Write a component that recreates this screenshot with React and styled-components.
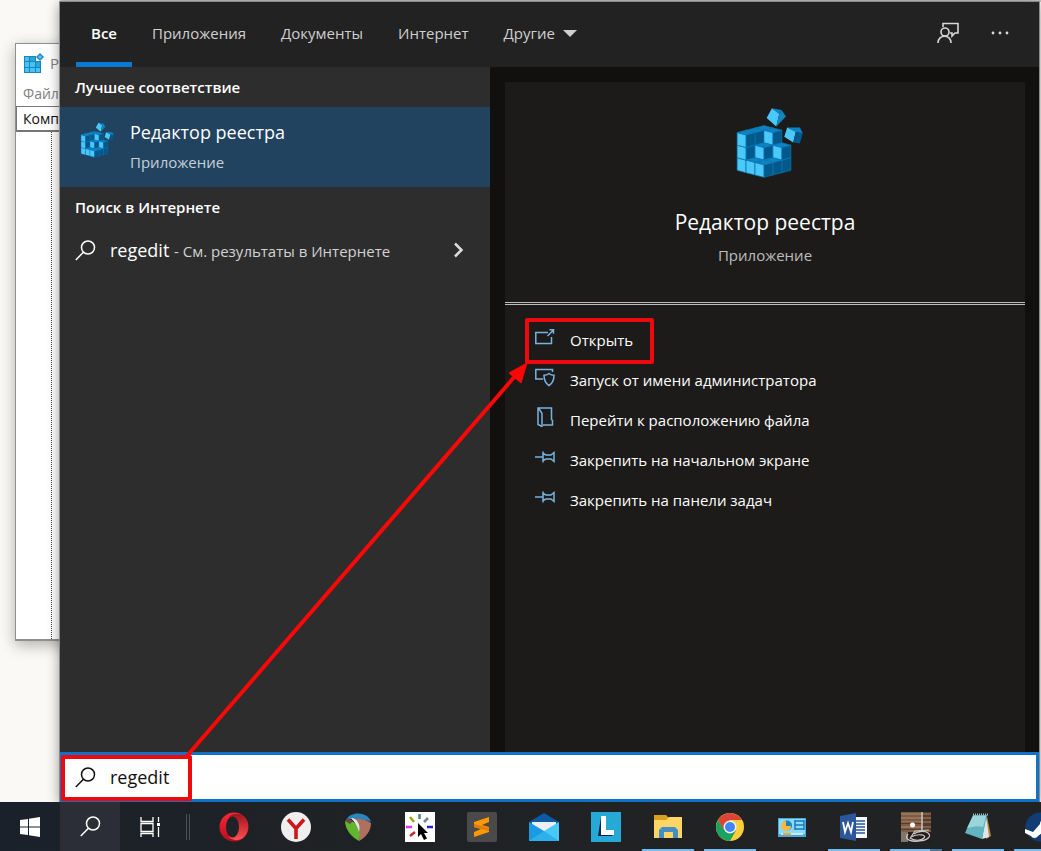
import * as React from "react"
import styled, { createGlobalStyle } from "styled-components"

const GlobalStyle = createGlobalStyle`
  * {
    box-sizing: border-box;
  }
  body {
    margin: 0;
    background: #faf9f5;
    font-family: "Open Sans", "Noto Sans", sans-serif;
  }
  button,
  input {
    font: inherit;
    color: inherit;
  }
  svg {
    display: block;
    flex: none;
  }
`

const Page = styled.div`
  min-height: 100vh;
  display: flex;
  flex-direction: column;
  overflow: hidden;
`

const Desktop = styled.div`
  position: relative;
  flex: 1;
  display: flex;
  padding: 2px 2px 0 60px;
  overflow: hidden;
  background: linear-gradient(#c4c4c4 2px, transparent 2px) 60px 0 no-repeat, #faf9f5;
`

const BackWindow = styled.section`
  position: absolute;
  left: 15px;
  top: 43px;
  bottom: 161px;
  width: 180px;
  display: flex;
  flex-direction: column;
  background: #fff;
  border: 1px solid #8d8f92;
  border-bottom-width: 2px;
  box-shadow: 0 4px 14px rgba(0, 0, 0, 0.3);
  font-size: 15px;
  color: #828282;

  & > .titlebar {
    height: 38px;
    padding-left: 8px;
    display: flex;
    align-items: center;
    gap: 6px;
  }
  & > .menu {
    height: 24px;
    padding-left: 7px;
    line-height: 24px;
    font-size: 14px;
  }
  & > .address {
    height: 26px;
    padding-left: 6px;
    line-height: 24px;
    font-size: 14px;
    color: #111;
    border: 1px solid #777;
    border-bottom-width: 2px;
  }
  & > .tree {
    flex: 1;
    width: 36px;
    border-right: 1px dotted #444;
  }
`

const Panel = styled.main`
  position: relative;
  flex: 1;
  display: flex;
  flex-direction: column;
  box-shadow: 0 0 0 1px #8b8b8b, 0 2px 12px rgba(0, 0, 0, 0.45);
`

const Header = styled.header`
  height: 65px;
  padding: 0 24px 0 16px;
  display: flex;
  align-items: stretch;
  justify-content: space-between;
  background: #222;
  color: #d0d0d0;

  & > nav {
    display: flex;
    gap: 5px;
  }
  & > div {
    display: flex;
    align-items: center;
    gap: 22px;
    padding-bottom: 3px;
  }
`

const Tab = styled.button`
  display: flex;
  align-items: center;
  gap: 8px;
  padding: 2px 15px 0;
  border: 0;
  border-bottom: 5px solid ${props => (props.$active ? "#0a78d4" : "transparent")};
  background: none;
  font-size: 15px;
  font-weight: ${props => (props.$active ? 600 : 400)};
  color: ${props => (props.$active ? "#fff" : "#d0d0d0")};
`

const IconButton = styled.button`
  display: flex;
  align-items: center;
  justify-content: center;
  width: 30px;
  height: 30px;
  padding: 0;
  border: 0;
  background: none;
`

const Body = styled.div`
  flex: 1;
  display: grid;
  grid-template-columns: 430px 1fr;
`

const Results = styled.div`
  background: #2d2d2d;
  color: #fff;

  & > h2 {
    margin: 0;
    padding: 0 15px;
    font-size: 15px;
    font-weight: 600;
    line-height: 40px;
  }
`

const BestMatch = styled.button`
  width: 100%;
  height: 80px;
  padding: 0 15px;
  display: flex;
  align-items: center;
  gap: 15px;
  border: 0;
  background: #21435f;
  text-align: left;

  & > svg {
    margin-bottom: 14px;
  }
  & strong,
  & span {
    display: block;
  }
  & strong {
    font-size: 18px;
    font-weight: 400;
    line-height: 30px;
  }
  & span {
    font-size: 15px;
    line-height: 30px;
    color: #c4d0da;
  }
`

const WebResult = styled.button`
  width: 100%;
  height: 46px;
  padding: 0 26px 0 15px;
  display: flex;
  align-items: center;
  border: 0;
  background: none;
  text-align: left;

  & > p {
    flex: 1;
    margin: 0 0 0 14px;
    font-size: 18px;
  }
  & small {
    font-size: 15px;
    color: #d2d2d2;
  }
`

const Details = styled.div`
  display: flex;
  padding: 15px 14px 0 15px;
  background: #11100f;
`

const Card = styled.div`
  flex: 1;
  background: #1c1b19;
  color: #fff;
`

const Hero = styled.div`
  height: 223px;
  padding-top: 25px;
  display: flex;
  flex-direction: column;
  align-items: center;
  border-bottom: 3px double #bdbdbd;

  & > h1 {
    margin: 27px 0 0;
    font-size: 21px;
    font-weight: 400;
    line-height: 32px;
  }
  & > p {
    margin: 4px 0 0;
    font-size: 15px;
    line-height: 26px;
    color: #bdbdbd;
  }
`

const Actions = styled.ul`
  list-style: none;
  margin: 0;
  padding: 15px 15px 0 20px;

  & > li {
    position: relative;
  }
`

const Action = styled.button`
  width: 100%;
  height: 40px;
  padding: 0 10px;
  display: flex;
  align-items: center;
  gap: 15px;
  border: 0;
  background: none;
  font-size: 15px;
  text-align: left;

  & > svg {
    margin-bottom: 6px;
  }
`

const SearchBar = styled.label`
  position: relative;
  height: 50px;
  display: flex;
  align-items: center;
  gap: 14px;
  padding-left: 12px;
  border: 3px solid #0f72c6;
  background: #fff;
  color: #111;

  & > input {
    flex: 1;
    min-width: 0;
    padding: 0;
    border: 0;
    outline: 0;
    background: none;
    font-size: 18px;
  }
`

const Highlight = styled.div`
  position: absolute;
  left: ${props => props.$left}px;
  top: ${props => props.$top}px;
  width: ${props => props.$width}px;
  height: 46px;
  border: 4px solid #ee0a0c;
  border-radius: 2px;
  pointer-events: none;
`

const Arrow = styled.svg`
  position: absolute;
  left: 180px;
  bottom: 40px;
  pointer-events: none;
`

const Taskbar = styled.footer`
  height: 49px;
  display: flex;
  overflow: hidden;
  background: linear-gradient(90deg, #1a212b, #1f2225 30%, #212223);
`

const SystemButton = styled.button`
  flex: none;
  width: 60px;
  padding: 0;
  display: flex;
  align-items: center;
  justify-content: center;
  border: 0;
  background: ${props => (props.$active ? "#2b2e36" : "none")};
`

const Separator = styled.div`
  flex: none;
  width: 4px;
  height: 26px;
  margin: 12px 13px 0 6px;
  border: solid #4d5157;
  border-width: 0 1px;
`

const underline = props => {
  if (props.$grouped) return "linear-gradient(90deg, #76b9ed 40px, #4d7898 40px)"
  return props.$running ? "linear-gradient(#76b9ed, #76b9ed)" : "none"
}

const TaskButton = styled.button`
  flex: none;
  width: 52px;
  margin: 0 5px;
  padding: 0;
  display: flex;
  align-items: center;
  justify-content: center;
  border: 0;
  background: ${underline} bottom / 100% 2px no-repeat;
`

// corner of the cube grid: i goes to the front, j to the right, k up
const corner = (i, j, k) => `${111 + 27 * i + 27 * j},${226 + 7 * i - 7 * j - 38 * k}`
const cubes = []
for (let i = 0; i < 3; i++) {
  for (let j = 2; j >= 0; j--) {
    for (let k = 0; k < 3; k++) {
      if (k === 0 || (k === 1 && i <= j) || (k === 2 && (i === 0 || (i === 1 && j === 2)))) {
        cubes.push([i, j, k])
      }
    }
  }
}

const RegistryIcon = ({ width, height }) => (
  <svg width={width} height={height} viewBox="75 35 240 217">
    {cubes.map(([i, j, k]) => (
      <g key={`${i}${j}${k}`} stroke="#0d77b2" strokeWidth="2" strokeLinejoin="round">
        <polygon
          fill="#4bc8fb"
          points={[corner(i, j, k), corner(i + 1, j, k), corner(i + 1, j, k + 1), corner(i, j, k + 1)].join(" ")}
        />
        <polygon
          fill="#00598a"
          points={[corner(i + 1, j, k), corner(i + 1, j + 1, k), corner(i + 1, j + 1, k + 1), corner(i + 1, j, k + 1)].join(" ")}
        />
        <polygon
          fill="#0b83c4"
          points={[corner(i, j, k + 1), corner(i + 1, j, k + 1), corner(i + 1, j + 1, k + 1), corner(i, j + 1, k + 1)].join(" ")}
        />
      </g>
    ))}
    <path fill="#4bc8fb" d="M216 39l22 16-9 39-29-26z" />
    <path fill="#0b83c4" d="M216 39l29 5-7 12z" />
    <path fill="#1583bd" d="M245 44l13 20-29 30 9-39z" />
    <path fill="#4bc8fb" d="M262 97l26 12-8 33-27-17z" />
    <path fill="#0b83c4" d="M262 97h38l9 17-21-3z" />
    <path fill="#00598a" d="M288 110l21 4-9 31-20-3z" />
  </svg>
)

const RegistrySmallIcon = () => (
  <svg width="20" height="20" viewBox="0 0 20 20">
    <path fill="#1786bd" d="M0 3h12v5h5v12H0z" />
    <path
      fill="#48c3f3"
      d="M1 4h4v4H1zM1 9h4v5H1zM6 9h5v5H6zM1 15h4v4H1zM6 15h5v4H6zM12 15h4v4h-4z"
    />
    <path fill="#28a5db" d="M6 4h5v4H6zM12 9h4v5h-4z" />
    <path fill="#2288b9" d="M16 0l4 4-4 4-4-4z" />
    <path fill="#65c6ec" d="M16 2l2 2-2 2-2-2z" />
  </svg>
)

const SearchIcon = ({ color = "#fff" }) => (
  <svg width="21" height="21" viewBox="0 0 21 21" fill="none" stroke={color} strokeWidth="1.5">
    <circle cx="13" cy="7.5" r="6.5" />
    <path d="M8.4 12.2L.8 20" />
  </svg>
)

const lineIcon = {
  width: 20,
  height: 20,
  viewBox: "0 0 20 20",
  fill: "none",
  stroke: "#78b3df",
  strokeWidth: 1.5,
}

const OpenIcon = () => (
  <svg {...lineIcon}>
    <path d="M13 5.500H.8v11h15.700V10M12.500 9l5.500-5.500M14.500 2.800h4v4" />
  </svg>
)

const AdminIcon = () => (
  <svg {...lineIcon}>
    <path d="M8 12H.8V2.500h16.700V5M14 6.500c1.500 1.200 3 1.700 5 1.700 0 5-1.500 8-5 10.500-3.500-2.500-5-5.500-5-10.500 2 0 3.500-.5 5-1.700z" />
  </svg>
)

const FolderIcon = () => (
  <svg {...lineIcon}>
    <path d="M8 18h9.500v-4.500l-1-1V1H3v16.500l4 2V6.500L3.500 1" />
  </svg>
)

const PinIcon = () => (
  <svg {...lineIcon}>
    <path d="M0 10h8M8 4.500v11M8 6.500l3 1.500h5l3-2.500v9L16 12h-5l-3 1.500" />
  </svg>
)

const FeedbackIcon = () => (
  <svg width="22" height="22" viewBox="0 0 22 22" fill="none" stroke="#d8d8d8" strokeWidth="1.6">
    <path d="M6 5V1.500h15v9.500h-3l-3 3v-3h-2" />
    <circle cx="8" cy="10" r="4" />
    <path d="M1 21c0-9 13-9 13 0" />
  </svg>
)

const StartIcon = () => (
  <svg width="20" height="20" viewBox="0 0 20 20" fill="#fff">
    <path d="M0 3l8-1v7.500H0zM9 1.800L20 0v9.500H9zM0 10.500h8V18l-8-1zM9 10.500h11V20L9 18.200z" />
  </svg>
)

const TaskViewIcon = () => (
  <svg width="20" height="20" viewBox="0 0 20 20" fill="none" stroke="#fff" strokeWidth="1.300">
    <path d="M1 0v4.500h12V0M1 6.500h12v8H1zM1 20v-3.500h12V20M18.500 0v5M18.500 10v10" />
    <path fill="#fff" stroke="none" d="M17 6h3v3h-3z" />
  </svg>
)

const OperaIcon = () => (
  <svg width="30" height="30" viewBox="0 0 30 30">
    <defs>
      <linearGradient id="operaRing" x1="0" y1="0" x2="0" y2="1">
        <stop offset="0" stopColor="#ff2638" />
        <stop offset="1" stopColor="#b50d1b" />
      </linearGradient>
      <linearGradient id="operaSide" x1="0" y1="0" x2="0" y2="1">
        <stop offset="0" stopColor="#a2131d" />
        <stop offset="1" stopColor="#ff5050" />
      </linearGradient>
    </defs>
    <circle cx="15" cy="15" r="14.500" fill="url(#operaRing)" />
    <path fill="url(#operaSide)" d="M10 5c4-4 10-4 14-1a14.500 14.500 0 0 1 0 22c-4 3-10 3-14-1z" />
    <ellipse cx="13.500" cy="15" rx="6.500" ry="10.500" fill="#1f2328" />
  </svg>
)

const YandexIcon = () => (
  <svg width="30" height="30" viewBox="0 0 30 30">
    <circle cx="15" cy="15" r="15" fill="#efefef" />
    <path d="M7 7.500l8 9 8-9M15 15v12" fill="none" stroke="#cd1719" strokeWidth="3.600" />
  </svg>
)

const ReaperIcon = () => (
  <svg width="30" height="30" viewBox="0 0 30 30">
    <path fill="#62b52f" d="M2 9c0 8 6 16 14 20 3-8 0-16-7-20z" />
    <path fill="#2a86bd" d="M3 8C7-1 25-1 28 10c-6-3-14-3-20-3z" />
    <path fill="#b0705f" d="M9 7c7-1 14 0 19 4 0 8-5 14-12 18 2-8 0-16-7-22z" />
    <path fill="#6b4a41" d="M2 9l3-3 5 3-3 3z" />
    <path fill="#e8e8e8" d="M8 6c6 0 10 7 8 14-1-5-4-10-8-14z" />
  </svg>
)

const ClickerIcon = () => (
  <svg width="30" height="30" viewBox="0 0 30 30">
    <path fill="#fff" d="M0 0h30v30H0z" />
    <g strokeWidth="2.500" fill="none">
      <path stroke="#4c8a6d" d="M14.500 2v5" />
      <path stroke="#9ba317" d="M5 5l4 5" />
      <path stroke="#6f8989" d="M23 6l-4 4" />
      <path stroke="#f02df0" d="M1 15h6" />
      <path stroke="#2222dc" d="M22 15h6" />
      <path stroke="#c82828" d="M5 24l5-4" />
    </g>
    <path d="M13 11v14l3-3 3 6 3-1.500-3-5.500h4z" />
  </svg>
)

const SublimeIcon = () => (
  <svg width="30" height="30" viewBox="0 0 30 30">
    <rect width="30" height="30" rx="2" fill="#4a4a4a" />
    <path fill="#ff9800" d="M7 10l15-5v5l-7 3 7 2v5L7 25v-5l7-3-7-2z" />
    <path fill="#df7f09" d="M7 12l15 4v3L7 15z" />
  </svg>
)

const MailIcon = () => (
  <svg width="30" height="30" viewBox="0 0 30 30">
    <path fill="#0c59a4" d="M0 10L15 1l15 9v4H0z" />
    <path fill="#eceff1" d="M3 10h24v6l-12 5-12-5z" />
    <path fill="#1b9ae4" d="M0 10l15 9v10H0z" />
    <path fill="#49c9f8" d="M30 10v19H15V19z" />
    <path fill="#2cb1ec" d="M0 29l15-10 15 10z" />
  </svg>
)

const LetterIcon = () => (
  <svg width="30" height="30" viewBox="0 0 30 30">
    <path fill="#27a9d8" d="M0 0h30v30H0z" />
    <path fill="#07234d" d="M10 5L7 24h14l2-5-9-1z" />
    <path fill="#fff" d="M10 4h5v14h8v5H10z" />
  </svg>
)

const ExplorerIcon = () => (
  <svg width="30" height="30" viewBox="0 0 30 30">
    <path fill="#dca11c" d="M1 3h12l3 3h12v6H1z" />
    <path fill="#fdd566" d="M1 8h12l3-3h13v21H1z" />
    <path fill="#428fc5" d="M6 26V18l3-3h13l3 3v8h-5v-6h-9v6z" />
  </svg>
)

const ChromeIcon = () => (
  <svg width="30" height="30" viewBox="0 0 30 30">
    <circle cx="15" cy="15" r="14" fill="#fbcf3b" />
    <path fill="#db4437" d="M2.900 8A14 14 0 0 1 27.100 8H15l-6 11z" />
    <path fill="#1aa260" d="M2.900 8A14 14 0 0 0 15 29l6-10.500-12-.5z" />
    <circle cx="15" cy="15" r="6.500" fill="#f1f1f1" />
    <circle cx="15" cy="15" r="5" fill="#4285f4" />
  </svg>
)

const ControlPanelIcon = () => (
  <svg width="30" height="30" viewBox="0 0 30 30">
    <path fill="#4aa9e0" d="M1 6h28v19H1z" />
    <path fill="#8bdafa" d="M2 7h26v15H2z" />
    <circle cx="10" cy="13.500" r="5" fill="#1684c5" />
    <path fill="#ffb83e" d="M9 9a5 5 0 1 0 5 5H9z" />
    <path stroke="#187eb9" strokeWidth="1.500" fill="none" d="M18 9h9M18 13h9M18 17h9M18 8v10M27 8v10" />
    <path stroke="#e9f8ff" strokeWidth="1.500" d="M4 22h22" />
    <path stroke="#f4a72c" strokeWidth="2" d="M6 22h8" />
  </svg>
)

const WordIcon = () => (
  <svg width="30" height="30" viewBox="0 0 30 30">
    <path fill="#f5f7fb" d="M14 5h14v21H14z" />
    <path stroke="#2b579a" strokeWidth="1.500" d="M16 9h10M16 12h10M16 15h10M16 18h10M16 21h10" />
    <path fill="#2b579a" d="M1 4l16-3v28L1 26z" />
    <path fill="none" stroke="#fff" strokeWidth="1.800" d="M4 10l2 10 3-9 3 9 2-10" />
  </svg>
)

const GuitarIcon = () => (
  <svg width="30" height="30" viewBox="0 0 30 30">
    <path fill="#5b3c28" d="M0 0h30v30H0z" />
    <path fill="#805b40" d="M0 0h20v10H0zM0 12h20v5H0z" />
    <path fill="#261c18" d="M0 20h30v10H0z" />
    <path stroke="#b9a592" d="M0 2h30M0 6h30M0 10h30M0 15h30M0 19h30" strokeWidth=".7" />
    <path stroke="#ccc" strokeWidth="1.500" d="M21 0v18" />
    <path fill="#a89c90" d="M0 20h7v10H0z" opacity=".7" />
    <circle cx="11.500" cy="13" r="2.500" fill="#fff" />
    <path
      fill="none"
      stroke="#c8c8c8"
      strokeWidth="1.200"
      d="M28 18l-14 1-4 6c8-4 16-2 13 1s-10 3-14 0M7 22c-5 6 4 8 12 7s12-5 8-8-12-1-14 1"
    />
  </svg>
)

const NotepadIcon = () => (
  <svg width="30" height="30" viewBox="0 0 30 30">
    <path fill="#b78a45" d="M24 4l4 20-5 3z" />
    <path fill="#dbe7e8" d="M23 3l3 22-7 2z" />
    <path fill="#62b4c1" d="M10 3h14l-5 24L2 21z" />
    <path fill="#a9dde0" d="M10 4h13l-3 11C13 13 8 16 4 16z" opacity=".8" />
    <path stroke="#aebaba" strokeWidth="2" strokeDasharray="1 1" d="M10 2.500h16" />
  </svg>
)

const SteamIcon = () => (
  <svg width="30" height="30" viewBox="0 0 30 30">
    <circle cx="15" cy="15" r="14.500" fill="#123c74" />
    <path fill="#fff" d="M0 17l8 3 7-8a6 6 0 1 1 6 6l-8 6a4 4 0 0 1-7 0l-6-3z" />
    <circle cx="21" cy="12" r="3.500" fill="#123c74" />
  </svg>
)

const tabs = ["Все", "Приложения", "Документы", "Интернет", "Другие"]

const actions = [
  { label: "Открыть", Icon: OpenIcon },
  { label: "Запуск от имени администратора", Icon: AdminIcon },
  { label: "Перейти к расположению файла", Icon: FolderIcon },
  { label: "Закрепить на начальном экране", Icon: PinIcon },
  { label: "Закрепить на панели задач", Icon: PinIcon },
]

const apps = [
  { name: "Opera", Icon: OperaIcon },
  { name: "Yandex", Icon: YandexIcon },
  { name: "Reaper", Icon: ReaperIcon },
  { name: "Clicker", Icon: ClickerIcon },
  { name: "Sublime Text", Icon: SublimeIcon },
  { name: "Mail", Icon: MailIcon },
  { name: "L", Icon: LetterIcon },
  { name: "Explorer", Icon: ExplorerIcon, running: true },
  { name: "Chrome", Icon: ChromeIcon, running: true },
  { name: "Control panel", Icon: ControlPanelIcon },
  { name: "Word", Icon: WordIcon, running: true },
  { name: "Guitar", Icon: GuitarIcon, running: true, grouped: true },
  { name: "Notepad", Icon: NotepadIcon, running: true },
  { name: "Steam", Icon: SteamIcon, running: true },
]

const App = () => (
  <Page>
    <GlobalStyle />
    <Desktop>
      <BackWindow>
        <div className="titlebar">
          <RegistrySmallIcon />
          Ред
        </div>
        <div className="menu">Файл</div>
        <div className="address">Комп</div>
        <div className="tree" />
      </BackWindow>

      <Panel>
        <Header>
          <nav>
            {tabs.map((tab, index) => (
              <Tab key={tab} $active={index === 0}>
                {tab}
                {tab === "Другие" && (
                  <svg width="14" height="7" viewBox="0 0 14 7" fill="#d0d0d0">
                    <path d="M0 0h14L7 7z" />
                  </svg>
                )}
              </Tab>
            ))}
          </nav>
          <div>
            <IconButton aria-label="Feedback">
              <FeedbackIcon />
            </IconButton>
            <IconButton aria-label="More">
              <svg width="18" height="4" viewBox="0 0 18 4" fill="#d8d8d8">
                <circle cx="2" cy="2" r="1.400" />
                <circle cx="9" cy="2" r="1.400" />
                <circle cx="16" cy="2" r="1.400" />
              </svg>
            </IconButton>
          </div>
        </Header>

        <Body>
          <Results>
            <h2>Лучшее соответствие</h2>
            <BestMatch>
              <RegistryIcon width="40" height="36" />
              <div>
                <strong>Редактор реестра</strong>
                <span>Приложение</span>
              </div>
            </BestMatch>
            <h2>Поиск в Интернете</h2>
            <WebResult>
              <SearchIcon />
              <p>
                regedit <small>- См. результаты в Интернете</small>
              </p>
              <svg width="11" height="16" viewBox="0 0 11 16" fill="none" stroke="#ddd" strokeWidth="2.500">
                <path d="M2 1.500L8.500 8 2 14.500" />
              </svg>
            </WebResult>
          </Results>

          <Details>
            <Card>
              <Hero>
                <RegistryIcon width="80" height="72" />
                <h1>Редактор реестра</h1>
                <p>Приложение</p>
              </Hero>
              <Actions>
                {actions.map(({ label, Icon }, index) => (
                  <li key={label}>
                    <Action>
                      <Icon />
                      {label}
                    </Action>
                    {index === 0 && <Highlight $left={0} $top={-2} $width={129} />}
                  </li>
                ))}
              </Actions>
            </Card>
          </Details>
        </Body>

        <SearchBar>
          <SearchIcon color="#111" />
          <input type="text" aria-label="Search" defaultValue="regedit" />
          <Highlight $left={-2} $top={0} $width={131} />
        </SearchBar>
      </Panel>

      <Arrow width="360" height="412" viewBox="180 350 360 412">
        <path d="M186 757L516 375" stroke="#fc0606" strokeWidth="4" strokeLinecap="round" />
        <path d="M527 363l-6 20-12-10z" fill="#fc0606" stroke="#fc0606" strokeWidth="1" />
      </Arrow>
    </Desktop>

    <Taskbar>
      <SystemButton aria-label="Start">
        <StartIcon />
      </SystemButton>
      <SystemButton $active aria-label="Search">
        <SearchIcon />
      </SystemButton>
      <SystemButton aria-label="Task view">
        <TaskViewIcon />
      </SystemButton>
      <Separator />
      {apps.map(({ name, Icon, running, grouped }) => (
        <TaskButton key={name} $running={running} $grouped={grouped} aria-label={name}>
          <Icon />
        </TaskButton>
      ))}
    </Taskbar>
  </Page>
)

export default App
